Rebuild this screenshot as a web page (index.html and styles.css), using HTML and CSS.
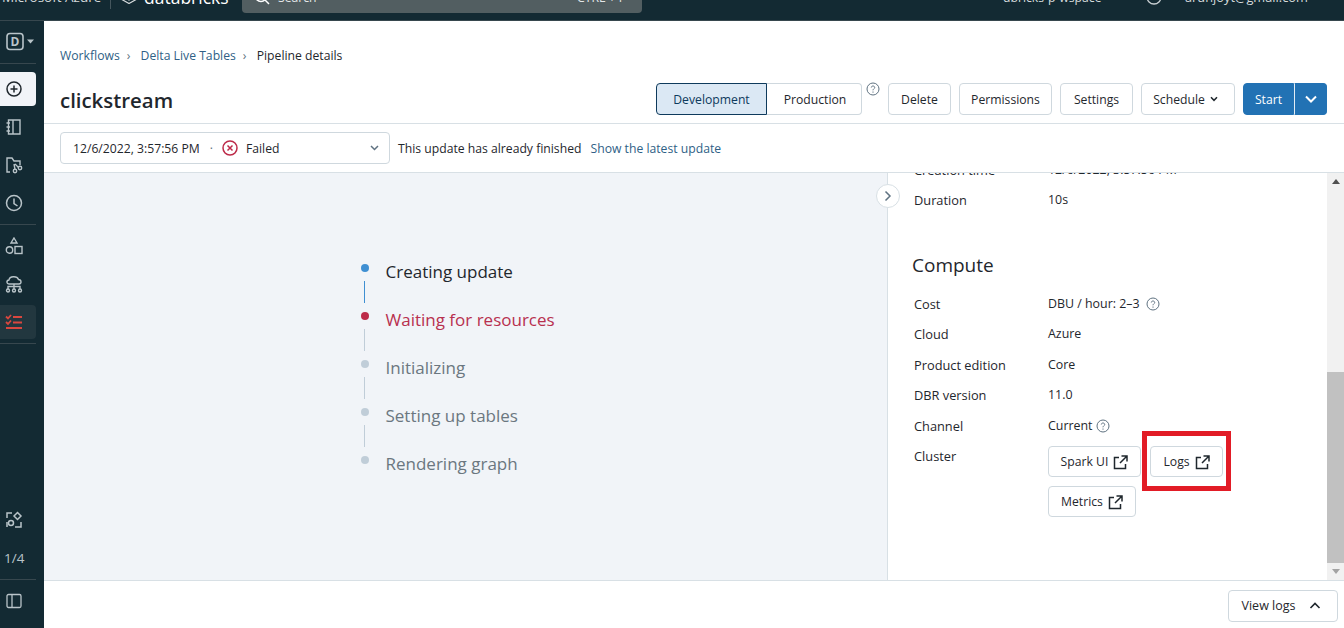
FILE: index.html
```html
<!DOCTYPE html>
<html lang="en">
<head>
  <meta charset="UTF-8">
  <meta name="viewport" content="width=device-width, initial-scale=1.0">
  <title>Pipeline details</title>
  <link rel="stylesheet" href="styles.css">
</head>
<body>
  <header class="topbar">
    <div class="topbar-row">
      <span class="azure">Microsoft Azure</span>
      <span class="topbar-sep"></span>
      <svg class="logo" width="18" height="18" viewBox="0 0 18 18" fill="none" stroke="#d5dadc" stroke-width="1.2">
        <path d="M1 6l8 4.500L17 6M1 9.500l8 4.500 8-4.500M1 13l8 4.500 8-4.500"/>
      </svg>
      <span class="brand">databricks</span>
      <div class="search">
        <svg width="16" height="16" viewBox="0 0 16 16" fill="none" stroke="#fff" stroke-width="1.5">
          <circle cx="7" cy="7" r="5.500"/><path d="M11 11l4 4"/>
        </svg>
        <span class="search-text">Search</span>
        <span class="search-key">CTRL + P</span>
      </div>
      <span class="workspace">dbricks-p-wspace</span>
      <svg class="user-help" width="16" height="16" viewBox="0 0 16 16" fill="none" stroke="#c9d0d3" stroke-width="1.300">
        <circle cx="8" cy="8" r="7"/>
      </svg>
      <span class="user">arunjoyt@gmail.com</span>
    </div>
  </header>

  <div class="app">
    <nav class="sidebar">
      <div class="nav-top">
        <svg width="28" height="20" viewBox="0 0 28 20" fill="none">
          <rect x="1" y="1.500" width="16" height="16" rx="3" stroke="#b9c4c9" stroke-width="1.600"/>
          <text x="9" y="14" text-anchor="middle" class="d-letter">D</text>
          <path d="M21 7.500h7l-3.500 4z" fill="#b9c4c9"/>
        </svg>
      </div>
      <div class="nav-sep"></div>
      <a class="nav-item nav-create">
        <svg width="18" height="18" viewBox="0 0 18 18" fill="none" stroke="#1f272d" stroke-width="1.500">
          <circle cx="9" cy="9" r="7"/><path d="M9 5.500v7M5.500 9h7"/>
        </svg>
      </a>
      <a class="nav-item">
        <svg width="18" height="18" viewBox="0 0 18 18" fill="none" stroke="#b9c4c9" stroke-width="1.400">
          <path d="M3.500 2h11.500v14H3.500zM8 2v14M1.500 5h3.500M1.500 9h3.500M1.500 13h3.500"/>
        </svg>
      </a>
      <a class="nav-item">
        <svg width="18" height="18" viewBox="0 0 18 18" fill="none" stroke="#b9c4c9" stroke-width="1.400">
          <path d="M5 16H2V2h5l2 3h6v4"/><circle cx="10" cy="15" r="1.700"/><circle cx="15" cy="12" r="1.700"/><path d="M9 8l1 5.500M10 8l3.500 3.500"/>
        </svg>
      </a>
      <a class="nav-item">
        <svg width="18" height="18" viewBox="0 0 18 18" fill="none" stroke="#b9c4c9" stroke-width="1.500">
          <circle cx="9" cy="9" r="7.500"/><path d="M9 4.500V9.500l3.500 2.500"/>
        </svg>
      </a>
      <div class="nav-sep nav-sep-tools"></div>
      <a class="nav-item">
        <svg width="18" height="18" viewBox="0 0 18 18" fill="none" stroke="#b9c4c9" stroke-width="1.400">
          <path d="M9 1l3 5H6z"/><circle cx="4.500" cy="13" r="3.200"/><rect x="10" y="9.500" width="7" height="7"/>
        </svg>
      </a>
      <a class="nav-item">
        <svg width="18" height="18" viewBox="0 0 18 18" fill="none" stroke="#b9c4c9" stroke-width="1.400">
          <path d="M4 9C1.500 9 1 5.500 4 5c.5-4 8-4.500 9.500-.5C16.500 4.500 17 9 14 9H4zM9 9v5M3 14v-2.500h12V14"/>
          <circle cx="3" cy="15.500" r="1.500"/><circle cx="9" cy="15.500" r="1.500"/><circle cx="15" cy="15.500" r="1.500"/>
        </svg>
      </a>
      <a class="nav-item nav-active">
        <svg width="18" height="18" viewBox="0 0 18 18" fill="none" stroke="#d9473f" stroke-width="1.800">
          <path d="M1 3.500l2 2L6 2M1 9l2 2 3-3.500M8 4h9M8 9.500h9M1 15h16"/>
        </svg>
      </a>
      <div class="nav-sep"></div>
      <div class="nav-spacer"></div>
      <a class="nav-item">
        <svg width="18" height="18" viewBox="0 0 18 18" fill="none" stroke="#b9c4c9" stroke-width="1.500">
          <path d="M7 2H2v5M2 11v5M16 11v5h-6"/><path d="M12.500 1.500l3.500 3.500-3.500 3.500L9 5z"/><circle cx="6" cy="12" r="2.500"/>
        </svg>
      </a>
      <div class="nav-item nav-count">1/4</div>
      <div class="nav-sep nav-sep-bottom"></div>
      <a class="nav-item nav-last">
        <svg width="16" height="16" viewBox="0 0 16 16" fill="none" stroke="#b9c4c9" stroke-width="1.300">
          <rect x="1" y="1.500" width="14" height="13" rx="1.500"/><path d="M6 1.500v13"/>
        </svg>
      </a>
    </nav>

    <main class="main">
      <section class="page-head">
        <div class="crumbs">
          <a>Workflows</a><span class="crumb-sep">›</span>
          <a>Delta Live Tables</a><span class="crumb-sep">›</span>
          <span>Pipeline details</span>
        </div>
        <div class="title-row">
          <h1>clickstream</h1>
          <div class="actions">
            <div class="mode-group">
              <button class="btn btn-mode-on">Development</button>
              <button class="btn btn-mode-off">Production</button>
            </div>
            <svg class="mode-help" width="14" height="14" viewBox="0 0 14 14" fill="none" stroke="#5f7281" stroke-width="1">
              <circle cx="7" cy="7" r="6"/><path d="M5.300 5.500C5.300 3.500 8.700 3.500 8.700 5.500 8.700 6.800 7 6.800 7 8.300M7 9.500v1.200"/>
            </svg>
            <button class="btn btn-delete">Delete</button>
            <button class="btn btn-permissions">Permissions</button>
            <button class="btn btn-settings">Settings</button>
            <button class="btn btn-schedule">Schedule
              <svg width="8" height="6" viewBox="0 0 9 7" fill="none" stroke="#1f272d" stroke-width="1.800"><path d="M1 1.500l3.500 3.500L8 1.500"/></svg>
            </button>
            <div class="start-group">
              <button class="btn btn-start">Start</button>
              <button class="btn btn-start-more">
                <svg width="14" height="9" viewBox="0 0 14 9" fill="none" stroke="#fff" stroke-width="2"><path d="M2 1.500l5 5 5-5"/></svg>
              </button>
            </div>
          </div>
        </div>
      </section>

      <section class="update-bar">
        <div class="update-select">
          <span>12/6/2022, 3:57:56 PM</span>
          <span class="dot-sep">·</span>
          <svg width="16" height="16" viewBox="0 0 16 16" fill="none" stroke="#bd2b49" stroke-width="1.500">
            <circle cx="8" cy="8" r="7"/><path d="M5.500 5.500l5 5M10.500 5.500l-5 5"/>
          </svg>
          <span class="failed">Failed</span>
          <svg class="select-caret" width="9" height="6" viewBox="0 0 9 6" fill="none" stroke="#5f7281" stroke-width="1.500"><path d="M1 1l3.500 3.500L8 1"/></svg>
        </div>
        <span class="update-note">This update has already finished</span>
        <a class="update-link">Show the latest update</a>
      </section>

      <section class="body">
        <div class="canvas">
          <ol class="steps">
            <li class="step step-done">Creating update</li>
            <li class="step step-error">Waiting for resources</li>
            <li class="step">Initializing</li>
            <li class="step">Setting up tables</li>
            <li class="step step-last">Rendering graph</li>
          </ol>
        </div>

        <aside class="details">
          <button class="collapse">
            <svg width="8" height="12" viewBox="0 0 8 12" fill="none" stroke="#5f7281" stroke-width="1.500"><path d="M1.500 1.500L6 6l-4.500 4.500"/></svg>
          </button>
          <div class="details-scroll">
            <div class="detail-row detail-cut"><span class="detail-label">Creation time</span><span>12/6/2022, 3:57:56 PM</span></div>
            <div class="detail-row"><span class="detail-label">Duration</span><span>10s</span></div>
            <h2>Compute</h2>
            <div class="detail-row"><span class="detail-label">Cost</span><span>DBU / hour: 2–3</span>
              <svg class="help" width="14" height="14" viewBox="0 0 14 14" fill="none" stroke="#5f7281" stroke-width="1"><circle cx="7" cy="7" r="6"/><path d="M5.300 5.500C5.300 3.500 8.700 3.500 8.700 5.500 8.700 6.800 7 6.800 7 8.300M7 9.500v1.200"/></svg>
            </div>
            <div class="detail-row"><span class="detail-label">Cloud</span><span>Azure</span></div>
            <div class="detail-row"><span class="detail-label">Product edition</span><span>Core</span></div>
            <div class="detail-row"><span class="detail-label">DBR version</span><span>11.0</span></div>
            <div class="detail-row"><span class="detail-label">Channel</span><span>Current</span>
              <svg class="help help-near" width="14" height="14" viewBox="0 0 14 14" fill="none" stroke="#5f7281" stroke-width="1"><circle cx="7" cy="7" r="6"/><path d="M5.300 5.500C5.300 3.500 8.700 3.500 8.700 5.500 8.700 6.800 7 6.800 7 8.300M7 9.500v1.200"/></svg>
            </div>
            <div class="detail-row detail-cluster">
              <span class="detail-label">Cluster</span>
              <div class="cluster-links">
                <a class="btn btn-link btn-spark">Spark UI
                  <svg width="15" height="15" viewBox="0 0 15 15" fill="none" stroke="#1f272d" stroke-width="1.500"><path d="M6 2.500H1.500v11h11V9M8.500 1h5.500v5.500M14 1L7 8"/></svg>
                </a>
                <a class="btn btn-link btn-logs">Logs
                  <svg width="15" height="15" viewBox="0 0 15 15" fill="none" stroke="#1f272d" stroke-width="1.500"><path d="M6 2.500H1.500v11h11V9M8.500 1h5.500v5.500M14 1L7 8"/></svg>
                  <span class="highlight"></span>
                </a>
                <a class="btn btn-link btn-metrics">Metrics
                  <svg width="15" height="15" viewBox="0 0 15 15" fill="none" stroke="#1f272d" stroke-width="1.500"><path d="M6 2.500H1.500v11h11V9M8.500 1h5.500v5.500M14 1L7 8"/></svg>
                </a>
              </div>
            </div>
          </div>
          <div class="scrollbar">
            <span class="arrow-up"></span>
            <div class="thumb-track"><div class="thumb"></div></div>
            <span class="arrow-down"></span>
          </div>
        </aside>
      </section>

      <footer class="footer">
        <button class="btn btn-view-logs">View logs
          <svg width="12" height="8" viewBox="0 0 12 8" fill="none" stroke="#1f272d" stroke-width="1.600"><path d="M1.500 6L6 1.500 10.500 6"/></svg>
        </button>
      </footer>
    </main>
  </div>
</body>
</html>
```

FILE: styles.css
```css
* {
  box-sizing: border-box;
}

html, body {
  height: 100%;
}

body {
  margin: 0;
  height: 628px;
  overflow: hidden;
  font-family: "Open Sans", "Noto Sans", sans-serif;
  font-size: 12.2px;
  color: #1f272d;
  background: #fff;
}

.topbar {
  height: 21px;
  background: #132a33;
  border-bottom: 1px solid #37474e;
  overflow: hidden;
}

.topbar-row {
  display: flex;
  align-items: center;
  height: 32px;
  margin-top: -19px;
  padding-left: 2px;
  color: #d5dadc;
}

.azure {
  width: 108px;
  font-size: 13.5px;
  white-space: nowrap;
}

.topbar-sep {
  align-self: flex-start;
  width: 1px;
  height: 28px;
  background: #45565d;
}

.logo {
  margin: 0 0 4px 9px;
}

.brand {
  margin-left: 6px;
  width: 98px;
  font-size: 17.5px;
  color: #fff;
}

.search {
  display: flex;
  align-items: center;
  width: 400px;
  height: 32px;
  padding: 0 16px 0 12px;
  background: #525e61;
  border-radius: 4px;
  color: #e4e7e8;
}

.search-text {
  margin-left: 8px;
  flex: 1;
}

.workspace {
  margin-left: 361px;
  width: 143px;
  font-size: 12.2px;
  white-space: nowrap;
}

.user-help {
  margin-right: 23px;
}

.user {
  font-size: 12.8px;
  white-space: nowrap;
}

/* app shell */
.app {
  display: flex;
  height: 607px;
}

.sidebar {
  display: flex;
  flex-direction: column;
  flex: none;
  width: 44px;
  background: #132a33;
  color: #b9c4c9;
}

.nav-top {
  height: 42px;
  padding: 11px 0 0 6px;
}

.d-letter {
  font-size: 12px;
  font-weight: 700;
  fill: #b9c4c9;
}

.nav-sep {
  flex: none;
  width: 36px;
  height: 1px;
  background: #37474e;
}

.nav-item {
  display: flex;
  align-items: center;
  justify-content: flex-start;
  flex: none;
  width: 36px;
  height: 38px;
  padding-left: 5px;
}

.nav-create {
  height: 34px;
  margin: 8px 0 2px;
  background: #f1f4f8;
  border-radius: 0 4px 4px 0;
}

.nav-sep-tools {
  margin: 2px 0;
}

.nav-active {
  height: 34px;
  margin: 2px 0 4px;
  background: #22373f;
  border-radius: 0 4px 4px 0;
}

.nav-spacer {
  flex: 1;
}

.nav-count {
  font-size: 13.5px;
  padding-left: 4px;
}

.nav-sep-bottom {
  margin-top: 2px;
}

.nav-last {
  height: 44px;
  margin-bottom: 4px;
  padding: 0 0 2px 6px;
}

/* main column */
.main {
  display: flex;
  flex-direction: column;
  flex: 1;
  min-width: 0;
}

.page-head {
  height: 103px;
  padding: 26px 17px 0 16px;
  border-bottom: 1px solid #d8e0e5;
}

.crumbs {
  height: 17px;
  line-height: 17px;
  color: #1f272d;
}

.crumbs a {
  color: #2f5f86;
}

.crumb-sep {
  margin: 0 7px;
  color: #5f7281;
}

.title-row {
  display: flex;
  align-items: center;
  justify-content: space-between;
  margin-top: 19px;
  height: 32px;
}

h1 {
  margin: 2px 0 0;
  font-size: 20.4px;
  font-weight: 600;
  color: #1f272d;
}

.actions {
  display: flex;
  align-items: center;
  gap: 8px;
}

.btn {
  display: inline-flex;
  align-items: center;
  justify-content: center;
  height: 32px;
  padding: 0;
  border: 1px solid #cfd8de;
  border-radius: 4px;
  background: #fff;
  font-family: inherit;
  font-size: 12.2px;
  color: #1f272d;
  white-space: nowrap;
}

.mode-group {
  display: flex;
}

.btn-mode-on {
  width: 111px;
  background: #dbe8f4;
  border-color: #0e3a5c;
  border-radius: 4px 0 0 4px;
  color: #0e3a5c;
}

.btn-mode-off {
  width: 95px;
  padding-left: 2px;
  border-left: none;
  border-radius: 0 4px 4px 0;
}

.mode-help {
  margin: -20px 0 0 -4px;
}

.btn-delete {
  width: 63px;
}

.btn-permissions {
  width: 93px;
}

.btn-settings {
  width: 73px;
}

.btn-schedule {
  width: 94px;
  gap: 5px;
  padding-right: 5px;
}

.start-group {
  display: flex;
}

.btn-start {
  width: 51px;
  background: #2272b4;
  border-color: #2272b4;
  border-radius: 4px 0 0 4px;
  color: #fff;
}

.btn-start-more {
  width: 33px;
  background: #2272b4;
  border-color: #2272b4;
  border-left-color: #e3edf5;
  border-radius: 0 4px 4px 0;
}

/* update selector */
.update-bar {
  display: flex;
  align-items: center;
  height: 49px;
  padding-left: 16px;
  border-bottom: 1px solid #d8e0e5;
}

.update-select {
  display: flex;
  align-items: center;
  width: 330px;
  height: 32px;
  padding: 0 10px 0 12px;
  border: 1px solid #cfd8de;
  border-radius: 4px;
}

.dot-sep {
  margin: 0 9px 0 10px;
  color: #5f7281;
}

.failed {
  margin-left: 8px;
}

.select-caret {
  margin-left: auto;
}

.update-note {
  margin-left: 8px;
}

.update-link {
  margin-left: 9px;
  color: #2f5f86;
}

/* middle area */
.body {
  display: flex;
  flex: 1;
  min-height: 0;
}

.canvas {
  display: flex;
  justify-content: center;
  flex: none;
  width: 844px;
  padding-top: 84px;
  background: #f1f4f8;
  border-right: 1px solid #d8e0e5;
}

.steps {
  list-style: none;
  width: 210px;
  margin: 0;
  padding: 0;
}

.step {
  position: relative;
  height: 48px;
  padding-left: 25px;
  line-height: 30px;
  font-size: 17px;
  color: #6b7780;
}

.step::before {
  content: "";
  position: absolute;
  left: 0;
  top: 7px;
  width: 8px;
  height: 8px;
  border-radius: 50%;
  background: #c0cdd8;
}

.step::after {
  content: "";
  position: absolute;
  left: 3px;
  top: 24px;
  width: 1px;
  height: 22px;
  background: #c0cdd8;
}

.step-last::after {
  display: none;
}

.step-done {
  color: #1f272d;
}

.step-done::before,
.step-done::after {
  background: #3f8fd2;
}

.step-error {
  color: #b8304f;
}

.step-error::before {
  background: #bd2b49;
}

/* details panel */
.details {
  position: relative;
  display: flex;
  flex: 1;
  min-width: 0;
  font-size: 12.4px;
}

.collapse {
  position: absolute;
  left: -12px;
  top: 11px;
  display: flex;
  align-items: center;
  justify-content: center;
  width: 24px;
  height: 24px;
  padding: 0;
  border: 1px solid #d8e0e5;
  border-radius: 50%;
  background: #fff;
  z-index: 2;
}

.details-scroll {
  flex: 1;
  min-width: 0;
  overflow: hidden;
  padding-left: 26px;
}

.detail-row {
  display: flex;
  align-items: flex-start;
  height: 30.500px;
  line-height: 30px;
}

.detail-cut {
  margin-top: -18px;
  height: 30px;
}

.detail-label {
  flex: none;
  width: 134px;
  font-size: 12.8px;
  font-weight: 500;
}

h2 {
  margin: 34px 0 0 -2px;
  height: 39px;
  line-height: 31px;
  font-size: 19px;
  font-weight: 500;
}

.help {
  margin: 8px 0 0 6px;
}

.help-near {
  margin-left: 3px;
}

.detail-cluster {
  height: auto;
}

.cluster-links {
  display: flex;
  flex-wrap: wrap;
  gap: 9px;
  width: 200px;
  margin-top: 5px;
}

.btn-link {
  position: relative;
  gap: 5px;
  height: 31px;
  padding-top: 2px;
  line-height: 1;
}

.btn-spark {
  width: 93px;
}

.btn-logs {
  width: 73px;
}

.btn-metrics {
  width: 88px;
}

.highlight {
  position: absolute;
  left: -9px;
  top: -16px;
  width: 89px;
  height: 60px;
  border: 5px solid #e21c26;
}

.scrollbar {
  display: flex;
  flex-direction: column;
  align-items: center;
  flex: none;
  width: 17px;
  background: #f1f1f1;
}

.arrow-up,
.arrow-down {
  flex: none;
  width: 0;
  height: 0;
  margin: 6px 0;
  border-left: 4px solid transparent;
  border-right: 4px solid transparent;
}

.arrow-up {
  border-bottom: 5px solid #505050;
}

.arrow-down {
  border-top: 5px solid #a3a3a3;
}

.thumb-track {
  display: flex;
  align-items: flex-end;
  flex: 1;
  width: 100%;
}

.thumb {
  width: 100%;
  height: 191px;
  background: #c1c1c1;
}

.footer {
  display: flex;
  justify-content: flex-end;
  align-items: center;
  height: 48px;
  padding: 2px 6px 0 0;
  border-top: 1px solid #d8e0e5;
}

.btn-view-logs {
  width: 110px;
  gap: 14px;
  padding-right: 3px;
  font-size: 12.5px;
}
```
